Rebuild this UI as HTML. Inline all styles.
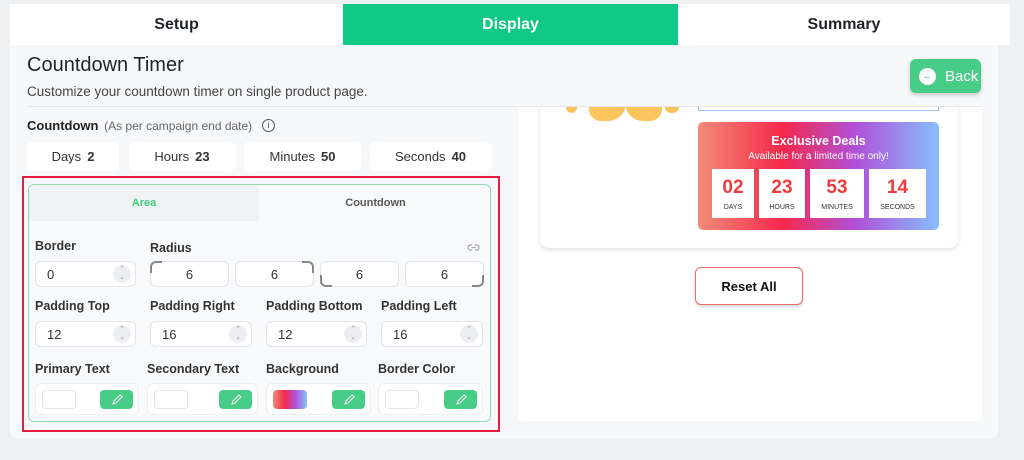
<!DOCTYPE html>
<html><head><meta charset="utf-8"><style>
*{box-sizing:border-box;margin:0;padding:0}
body{width:1024px;height:460px;background:#eff0f2;font-family:"Liberation Sans",sans-serif;position:relative;overflow:hidden;color:#1f2328}
.a{position:absolute}
.tab{top:4px;height:41px;display:flex;align-items:center;justify-content:center;font-weight:bold;font-size:16px}
.box{background:#fff;border-radius:5px;display:flex;align-items:center;justify-content:center;font-size:13px;color:#333}
.box b{margin-left:6px}
.lbl{font-size:12.5px;font-weight:bold;color:#333}
.inp{background:#fff;border:1px solid #e3e5e8;border-radius:6px;height:26px;font-size:13px;color:#333;display:flex;align-items:center}
.spin{position:absolute;right:4px;top:3px;width:18px;height:18px;border-radius:50%;background:#eceef1;font-size:7px;color:#999;text-align:center;line-height:8px;padding-top:1px}
.cbox{background:#fff;border:1px solid #eceef0;border-radius:6px;height:32px}
.sw{position:absolute;left:6px;top:6px;width:34px;height:19px;border:1px solid #e3e5e8;border-radius:4px;background:#fff}
.pen{position:absolute;right:5px;top:6px;width:33px;height:19px;border-radius:4px;background:#48cd88;display:flex;align-items:center;justify-content:center}
.tb{background:#fff;width:42px;height:49px;text-align:center}
.tb .n{color:#ef3b3b;font-weight:bold;font-size:19px;margin-top:9px;line-height:20px}
.tb .u{font-size:7px;color:#333;margin-top:6px}
</style></head><body>
<div class="a" style="left:10px;top:45px;width:988px;height:393px;background:#f7f8fa;border-radius:0 0 6px 6px"></div>
<div class="a tab" style="left:10px;width:333px;background:#fff">Setup</div>
<div class="a tab" style="left:343px;width:335px;background:#10c987;color:#fff">Display</div>
<div class="a tab" style="left:678px;width:332px;background:#fff">Summary</div>

<div class="a" style="left:518px;top:107px;width:464px;height:314px;background:#fff;border-radius:0 0 4px 4px"></div>
<div class="a" style="left:540px;top:96px;width:418px;height:152px;background:#fff;border-radius:0 0 9px 9px;box-shadow:0 2px 5px rgba(0,0,0,.12)"></div>
<div class="a" style="left:566px;top:106px;width:11px;height:7px;background:#fbc45c;border-radius:0 0 6px 6px"></div>
<div class="a" style="left:589px;top:100px;width:37px;height:21px;background:#fbc45c;border-radius:0 0 18px 12px"></div>
<div class="a" style="left:625px;top:100px;width:37px;height:21px;background:#fbc45c;border-radius:0 0 12px 18px"></div>
<div class="a" style="left:665px;top:106px;width:14px;height:7px;background:#fbc45c;border-radius:0 0 6px 6px"></div>
<div class="a" style="left:698px;top:96px;width:241px;height:15px;border:1px solid #9cc3f3;border-top:none"></div>
<div class="a" style="left:698px;top:122px;width:241px;height:108px;border-radius:5px;background:linear-gradient(90deg,#f28c78 0%,#f5284a 35%,#b04fd8 65%,#87c0fc 100%)">
 <div style="text-align:center;color:#fff;font-weight:bold;font-size:12.5px;margin-top:12px">Exclusive Deals</div>
 <div style="text-align:center;color:#fff;font-size:10px;margin-top:3px">Available for a limited time only!</div>
 <div style="display:flex;gap:5px;margin:7px 0 0 14px">
  <div class="tb"><div class="n">02</div><div class="u">DAYS</div></div>
  <div class="tb" style="width:46px"><div class="n">23</div><div class="u">HOURS</div></div>
  <div class="tb" style="width:54px"><div class="n">53</div><div class="u">MINUTES</div></div>
  <div class="tb" style="width:57px"><div class="n">14</div><div class="u">SECONDS</div></div>
 </div>
</div>
<div class="a" style="left:695px;top:267px;width:108px;height:38px;border:1px solid #ef6b6b;border-radius:6px;background:#fff;box-shadow:0 2px 3px rgba(0,0,0,.15);display:flex;align-items:center;justify-content:center;font-size:13px;font-weight:bold;color:#111">Reset All</div>

<div class="a" style="left:10px;top:45px;width:988px;height:62px;background:#f7f8fa"></div>
<div class="a" style="left:27px;top:106px;width:955px;height:1px;background:#e4e6ea"></div>
<div class="a" style="left:27px;top:54px;font-size:20px;color:#1f2328">Countdown Timer</div>
<div class="a" style="left:27px;top:84px;font-size:13.5px;color:#444">Customize your countdown timer on single product page.</div>
<div class="a" style="left:910px;top:59px;width:71px;height:34px;background:#48cd88;border-radius:6px;box-shadow:0 2px 4px rgba(0,0,0,.2);color:#fff;font-size:15px;display:flex;align-items:center;padding-left:9px">
<span style="width:17px;height:17px;border-radius:50%;background:#fff;color:#48cd88;font-size:11px;font-weight:bold;display:flex;align-items:center;justify-content:center;margin-right:9px">&#8592;</span>Back</div>

<div class="a" style="left:27px;top:118px;font-size:13px;font-weight:bold;color:#222">Countdown <span style="font-weight:normal;font-size:12px;color:#666;margin-left:2px">(As per campaign end date)</span></div>
<div class="a" style="left:262px;top:119px;width:13px;height:13px;border:1.3px solid #555;border-radius:50%;font-size:9px;text-align:center;line-height:11px;color:#555">i</div>
<div class="a box" style="left:27px;top:142px;width:92px;height:29px">Days<b>2</b></div>
<div class="a box" style="left:129px;top:142px;width:106px;height:29px">Hours<b>23</b></div>
<div class="a box" style="left:244px;top:142px;width:117px;height:29px">Minutes<b>50</b></div>
<div class="a box" style="left:370px;top:142px;width:121px;height:29px">Seconds<b>40</b></div>

<div class="a" style="left:22px;top:176px;width:478px;height:256px;border:2px solid #ee1c3c"></div>
<div class="a" style="left:28px;top:184px;width:463px;height:238px;border:1px solid #8fdcb0;border-radius:6px;background:#f9fafb;overflow:hidden">
 <div style="position:absolute;left:0;top:0;width:230px;height:36px;background:#f1f2f4;color:#3ecf82;font-weight:bold;font-size:11px;display:flex;align-items:center;justify-content:center">Area</div>
 <div style="position:absolute;left:230px;top:0;width:233px;height:36px;color:#555;font-weight:bold;font-size:11px;display:flex;align-items:center;justify-content:center">Countdown</div>
</div>

<div class="a lbl" style="left:35px;top:239px">Border</div>
<div class="a lbl" style="left:150px;top:241px">Radius</div>
<svg class="a" style="left:467px;top:242px" width="13" height="10" viewBox="0 0 13 10"><path d="M5 3H3.5a2.5 2.5 0 0 0 0 5H5M8 3h1.5a2.5 2.5 0 0 1 0 5H8M4.5 5.5h4" stroke="#aaa" stroke-width="1.3" fill="none"/></svg>
<div class="a inp" style="left:35px;top:261px;width:101px;padding-left:11px">0<div class="spin">&#8963;<br>&#8964;</div></div>
<div class="a inp" style="left:150px;top:261px;width:79px;justify-content:center">6</div>
<div class="a inp" style="left:235px;top:261px;width:79px;justify-content:center">6</div>
<div class="a inp" style="left:320px;top:261px;width:79px;justify-content:center">6</div>
<div class="a inp" style="left:405px;top:261px;width:79px;justify-content:center">6</div>
<div class="a" style="left:150px;top:261px;width:12px;height:12px;border-left:2px solid #888;border-top:2px solid #888;border-radius:6px 0 0 0"></div>
<div class="a" style="left:302px;top:261px;width:12px;height:12px;border-right:2px solid #888;border-top:2px solid #888;border-radius:0 6px 0 0"></div>
<div class="a" style="left:320px;top:275px;width:12px;height:12px;border-left:2px solid #888;border-bottom:2px solid #888;border-radius:0 0 0 6px"></div>
<div class="a" style="left:472px;top:275px;width:12px;height:12px;border-right:2px solid #888;border-bottom:2px solid #888;border-radius:0 0 6px 0"></div>

<div class="a lbl" style="left:35px;top:299px">Padding Top</div>
<div class="a lbl" style="left:150px;top:299px">Padding Right</div>
<div class="a lbl" style="left:266px;top:299px">Padding Bottom</div>
<div class="a lbl" style="left:381px;top:299px">Padding Left</div>
<div class="a inp" style="left:35px;top:321px;width:101px;padding-left:11px">12<div class="spin">&#8963;<br>&#8964;</div></div>
<div class="a inp" style="left:150px;top:321px;width:102px;padding-left:11px">16<div class="spin">&#8963;<br>&#8964;</div></div>
<div class="a inp" style="left:266px;top:321px;width:101px;padding-left:11px">12<div class="spin">&#8963;<br>&#8964;</div></div>
<div class="a inp" style="left:381px;top:321px;width:102px;padding-left:11px">16<div class="spin">&#8963;<br>&#8964;</div></div>

<div class="a lbl" style="left:35px;top:362px">Primary Text</div>
<div class="a lbl" style="left:147px;top:362px">Secondary Text</div>
<div class="a lbl" style="left:266px;top:362px">Background</div>
<div class="a lbl" style="left:378px;top:362px">Border Color</div>
<div class="a cbox" style="left:35px;top:383px;width:104px"><div class="sw"></div><div class="pen"><svg width="12" height="12" viewBox="0 0 12 12"><path d="M2 10l1-3 6-6 2 2-6 6z" stroke="#fff" stroke-width="1" fill="none"/></svg></div></div>
<div class="a cbox" style="left:147px;top:383px;width:111px"><div class="sw"></div><div class="pen"><svg width="12" height="12" viewBox="0 0 12 12"><path d="M2 10l1-3 6-6 2 2-6 6z" stroke="#fff" stroke-width="1" fill="none"/></svg></div></div>
<div class="a cbox" style="left:266px;top:383px;width:105px"><div class="sw" style="background:linear-gradient(90deg,#f28c78,#f5284a 35%,#b04fd8 65%,#87c0fc);border:none"></div><div class="pen"><svg width="12" height="12" viewBox="0 0 12 12"><path d="M2 10l1-3 6-6 2 2-6 6z" stroke="#fff" stroke-width="1" fill="none"/></svg></div></div>
<div class="a cbox" style="left:378px;top:383px;width:105px"><div class="sw"></div><div class="pen"><svg width="12" height="12" viewBox="0 0 12 12"><path d="M2 10l1-3 6-6 2 2-6 6z" stroke="#fff" stroke-width="1" fill="none"/></svg></div></div>
</body></html>
